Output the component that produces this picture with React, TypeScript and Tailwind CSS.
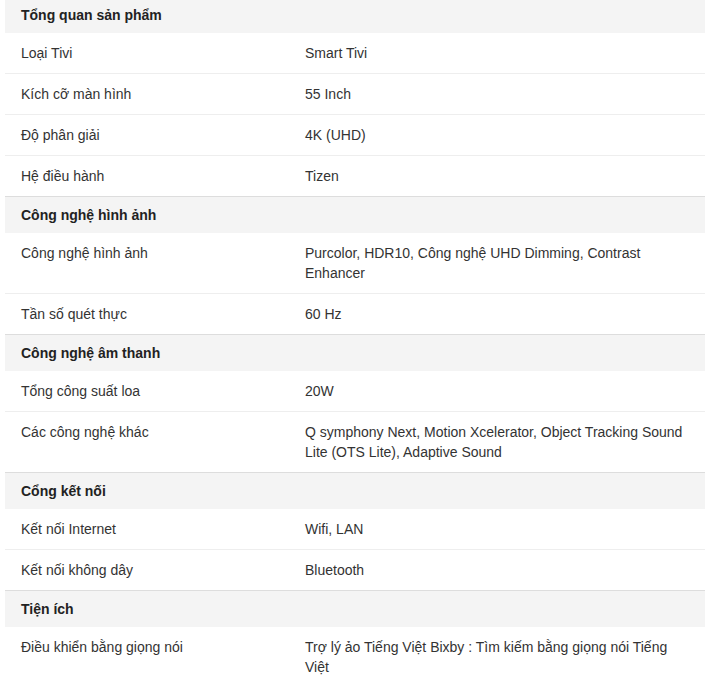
import React from "react";

type Row = { label: string; value: string };
type Section = { title: string; rows: Row[] };

const sections: Section[] = [
  {
    title: "Tổng quan sản phẩm",
    rows: [
      { label: "Loại Tivi", value: "Smart Tivi" },
      { label: "Kích cỡ màn hình", value: "55 Inch" },
      { label: "Độ phân giải", value: "4K (UHD)" },
      { label: "Hệ điều hành", value: "Tizen" },
    ],
  },
  {
    title: "Công nghệ hình ảnh",
    rows: [
      {
        label: "Công nghệ hình ảnh",
        value: "Purcolor, HDR10, Công nghệ UHD Dimming, Contrast Enhancer",
      },
      { label: "Tần số quét thực", value: "60 Hz" },
    ],
  },
  {
    title: "Công nghệ âm thanh",
    rows: [
      { label: "Tổng công suất loa", value: "20W" },
      {
        label: "Các công nghệ khác",
        value:
          "Q symphony Next, Motion Xcelerator, Object Tracking Sound Lite (OTS Lite), Adaptive Sound",
      },
    ],
  },
  {
    title: "Cổng kết nối",
    rows: [
      { label: "Kết nối Internet", value: "Wifi, LAN" },
      { label: "Kết nối không dây", value: "Bluetooth" },
    ],
  },
  {
    title: "Tiện ích",
    rows: [
      {
        label: "Điều khiển bằng giọng nói",
        value: "Trợ lý ảo Tiếng Việt Bixby : Tìm kiếm bằng giọng nói Tiếng Việt",
      },
    ],
  },
];

export default function App() {
  return (
    <div
      className="min-h-[678px] bg-white pl-[5px] text-[14px] leading-[20px] text-[#333333]"
      style={{ fontFamily: '"Liberation Sans", Arial, sans-serif' }}
    >
      <div className="w-[700px] -mt-[3px]">
        {sections.map((s) => (
          <div key={s.title}>
            <div className="bg-[#f4f4f4] px-4 py-2 font-bold text-[#222222]">
              {s.title}
            </div>
            {s.rows.map((r, ri) => (
              <div
                key={r.label}
                className={
                  "grid grid-cols-[284px_1fr] border-b " +
                  (ri === s.rows.length - 1 ? "border-[#dddddd]" : "border-[#eeeeee]")
                }
              >
                <div className="px-4 py-[10px]">{r.label}</div>
                <div className="px-4 py-[10px]">{r.value}</div>
              </div>
            ))}
          </div>
        ))}
      </div>
    </div>
  );
}
